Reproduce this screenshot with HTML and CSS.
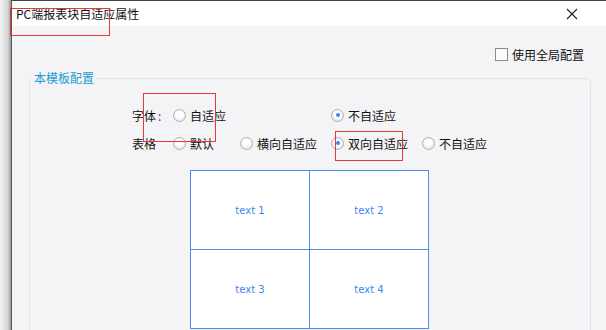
FILE: index.html
```html
<!DOCTYPE html>
<html lang="zh-CN">
<head>
    <meta charset="UTF-8">
    <title>PC端报表块自适应属性</title>
    <link rel="stylesheet" href="styles.css">
</head>
<body>
    <div class="screen">
        <div class="shadow-strip"></div>
        <div class="dialog">
            <div class="title-bar">
                <span class="title-text">PC端报表块自适应属性</span>
                <svg class="close-icon" width="12" height="12" viewBox="0 0 12 12">
                    <path d="M1 1 L11 11 M11 1 L1 11" stroke="#222" stroke-width="1.1" fill="none"/>
                </svg>
            </div>
            <div class="dialog-body">
                <div class="global-row">
                    <span class="checkbox"></span>
                    <span>使用全局配置</span>
                </div>
                <fieldset class="config-group">
                    <legend>本模板配置</legend>
                    <div class="form-grid">
                        <span class="field-label">字体<span class="colon">:</span></span>
                        <label class="radio-item"><span class="radio"></span>自适应</label>
                        <span></span>
                        <label class="radio-item"><span class="radio checked"></span>不自适应</label>
                        <span></span>

                        <span class="field-label">表格</span>
                        <label class="radio-item"><span class="radio"></span>默认</label>
                        <label class="radio-item"><span class="radio"></span>横向自适应</label>
                        <label class="radio-item"><span class="radio checked"></span>双向自适应</label>
                        <label class="radio-item"><span class="radio"></span>不自适应</label>
                    </div>
                    <table class="preview-table">
                        <tr>
                            <td>text 1</td>
                            <td>text 2</td>
                        </tr>
                        <tr>
                            <td>text 3</td>
                            <td>text 4</td>
                        </tr>
                    </table>
                </fieldset>
            </div>
        </div>

        <!-- highlight marks on top of the screenshot -->
        <div class="mark mark-title"></div>
        <div class="mark mark-font"></div>
        <div class="mark mark-table"></div>
    </div>
</body>
</html>
```

FILE: styles.css
```css
body {
    margin: 0;
    font-family: "Noto Sans CJK SC", "Microsoft YaHei", sans-serif;
    font-size: 12px;
    color: #111;
    overflow: hidden;
}

.screen {
    position: relative;
    display: flex;
    width: 606px;
    height: 330px;
    overflow: hidden;
}

.shadow-strip {
    width: 11px;
    flex-shrink: 0;
    background: linear-gradient(to right, #f3f3f3, #d6d6d6 70%, #9a9a9a);
}

.dialog {
    flex: 1;
    display: flex;
    flex-direction: column;
    border-left: 1px solid #555;
    border-top: 1px solid #444;
    background: #f4f4f7;
}

.title-bar {
    flex-shrink: 0;
    height: 25px;
    display: flex;
    align-items: center;
    justify-content: space-between;
    padding: 0 28px 0 4px;
    background: #fff;
}

.title-text {
    line-height: 16px;
}

.close-icon {
    margin-top: 1px;
}

.dialog-body {
    flex-shrink: 0;
    padding: 18px 15px 0 17px;
}

.global-row {
    display: flex;
    align-items: center;
    justify-content: flex-end;
    gap: 4px;
    height: 20px;
    padding-right: 7px;
}

.checkbox {
    width: 11px;
    height: 11px;
    border: 1px solid #8c8c8c;
    background: #fbfbfb;
}

.config-group {
    margin: 6px 0 0 0;
    padding: 0 0 20px 0;
    border: 1px solid #e2e2e6;
    border-radius: 5px;
}

.config-group legend {
    margin-left: 2px;
    padding: 0 2px;
    line-height: 16px;
    color: #1c9ad6;
}

.form-grid {
    display: grid;
    grid-template-columns: 41px 67px 91px 91px auto;
    row-gap: 8px;
    padding: 19px 0 0 102px;
}

.field-label,
.radio-item {
    display: flex;
    align-items: center;
    height: 20px;
}

.colon {
    color: #6b2a86;
    margin-left: 2px;
}

.radio-item {
    gap: 4px;
}

.radio {
    position: relative;
    width: 11px;
    height: 11px;
    border: 1px solid #b0b0b0;
    border-radius: 50%;
    background: radial-gradient(circle at 50% 40%, #ffffff 30%, #dedede);
}

.radio.checked::after {
    content: "";
    position: absolute;
    left: 3.5px;
    top: 3.5px;
    width: 4px;
    height: 4px;
    border-radius: 50%;
    background: #3a86f0;
}

.preview-table {
    margin: 17px 0 0 160px;
    border-collapse: collapse;
    background: #fff;
}

.preview-table td {
    width: 118px;
    height: 78px;
    border: 1px solid #4a8cf0;
    padding: 0;
    text-align: center;
    font-family: "DejaVu Sans", sans-serif;
    font-size: 10px;
    color: #3f86ee;
}

.mark {
    position: absolute;
    border: 1px solid #e53935;
}

.mark-title {
    left: 10px;
    top: 8px;
    width: 98px;
    height: 26px;
}

.mark-font {
    left: 143px;
    top: 93px;
    width: 71px;
    height: 47px;
}

.mark-table {
    left: 335px;
    top: 131px;
    width: 66px;
    height: 28px;
}
```
